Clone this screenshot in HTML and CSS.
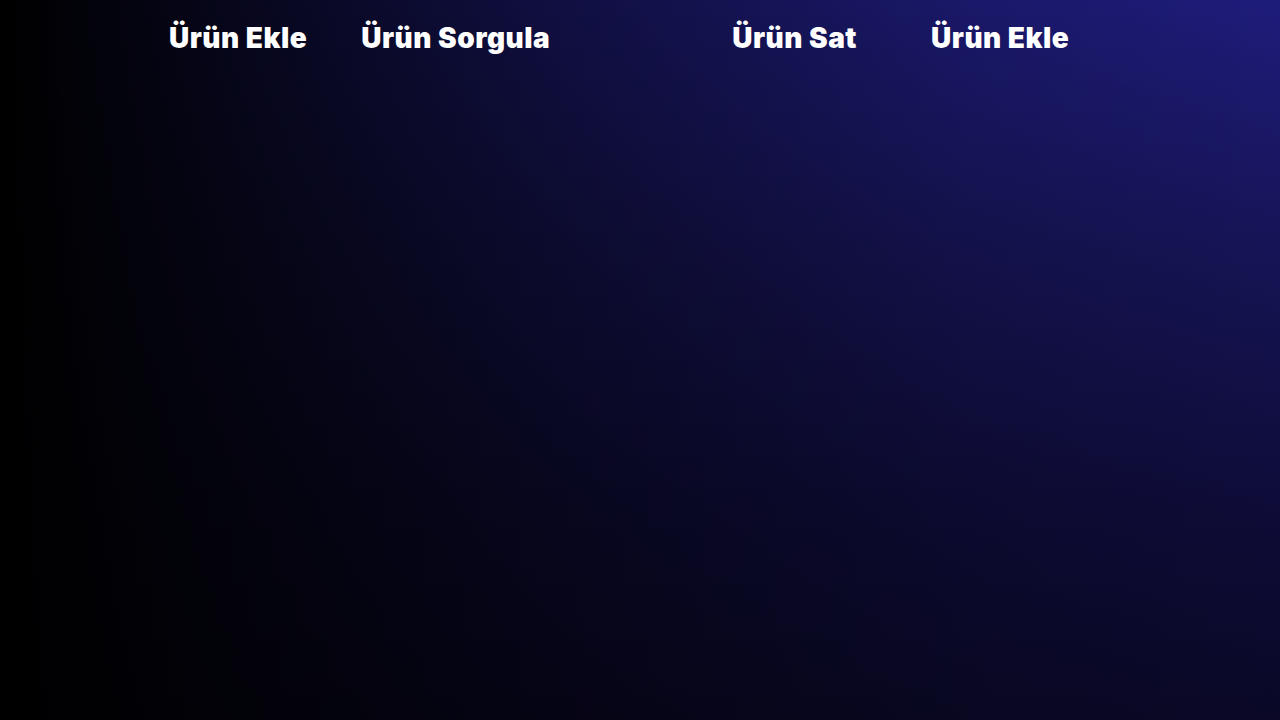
FILE: index.html
```html
<!DOCTYPE html>
<html lang="tr">
<head>
<meta charset="utf-8">
<title>Ürün</title>
<link rel="stylesheet" href="styles.css">
</head>
<body>
<nav class="nav">
  <a class="nav-item item-1" href="#">Ürün Ekle</a>
  <a class="nav-item item-2" href="#">Ürün Sorgula</a>
  <a class="nav-item item-3" href="#">Ürün Sat</a>
  <a class="nav-item item-4" href="#">Ürün Ekle</a>
</nav>
</body>
</html>
```
FILE: styles.css
```css
html, body {
  margin: 0;
  height: 100%;
}
body {
  background:
    linear-gradient(to right, rgba(0, 0, 0, 1) 0%, rgba(0, 0, 0, 0.75) 20%, rgba(0, 0, 0, 0.45) 45%, rgba(0, 0, 0, 0.15) 75%, rgba(0, 0, 0, 0) 100%),
    linear-gradient(to bottom, #1e1c7a 0%, #161455 35%, #0e0c38 70%, #0a0826 100%);
  font-family: Inter, "Noto Sans", sans-serif;
  overflow: hidden;
}
.nav {
  display: flex;
  align-items: baseline;
  padding: 19px 0 0 169px;
}
.nav-item {
  color: #ffffff;
  text-decoration: none;
  font-weight: 900;
  font-size: 28px;
  line-height: 38px;
  letter-spacing: 0.5px;
}
.item-2 { margin-left: 54px; }
.item-3 { margin-left: 182px; }
.item-4 { margin-left: 74px; }
```
